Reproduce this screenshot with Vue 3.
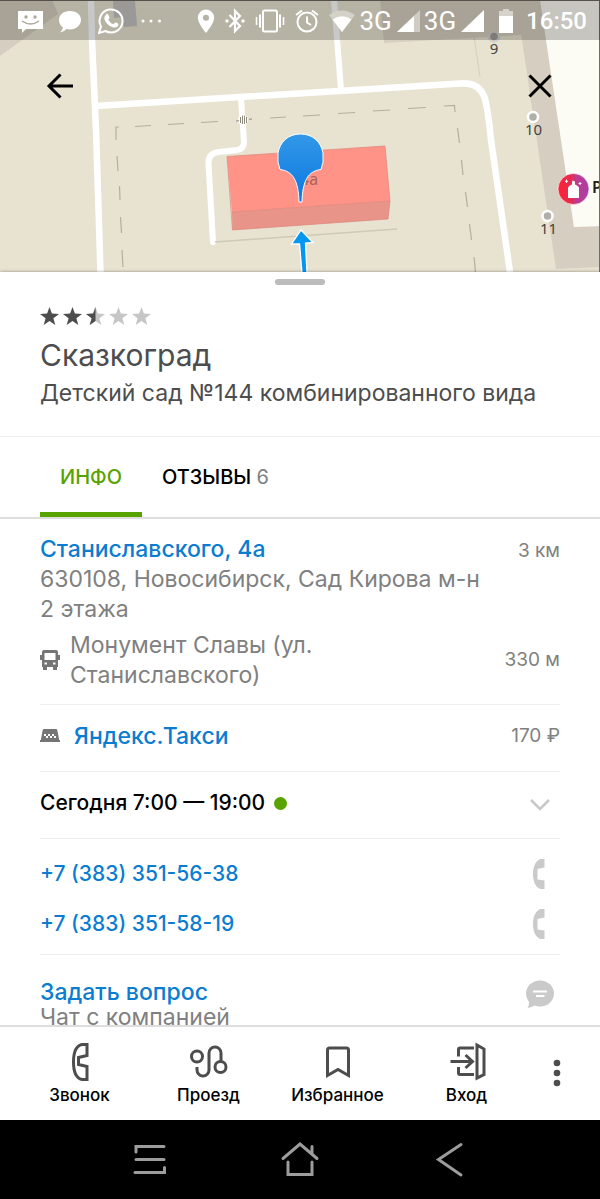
<script setup>
import { ref } from 'vue'

const stars = [1, 1, 0.5, 0, 0]
const phones = ['+7 (383) 351-56-38', '+7 (383) 351-58-19']
const tab = ref('info')
</script>

<template>
  <div class="app">
    <header class="map">
      <svg class="map-canvas" viewBox="0 0 600 272" preserveAspectRatio="xMidYMid slice" aria-hidden="true">
        <defs>
          <linearGradient id="pin" x1="0" y1="0" x2="0" y2="1">
            <stop offset="0" stop-color="#3298e8" />
            <stop offset="1" stop-color="#0b78e0" />
          </linearGradient>
          <linearGradient id="shop" x1="0" y1="0" x2="1" y2="0">
            <stop offset="0" stop-color="#ff2038" />
            <stop offset="0.4" stop-color="#e72c4c" />
            <stop offset="0.6" stop-color="#bf3a90" />
            <stop offset="1" stop-color="#a83fa8" />
          </linearGradient>
        </defs>
        <rect width="600" height="272" fill="#e8e3d1" />
        <path d="M0 0H52L58 14L0 56Z" fill="#d6cfc1" />
        <path d="M113 0H135L137 26L124 27L122 17L114 18Z" fill="#c6c2c2" />
        <path d="M380 0H540L548 40L521 35L384 43Z" fill="#d6cfc1" />
        <path d="M516 0H545L574 227L600 226V267L556 269Z" fill="#d6cfc1" />
        <path d="M540 0H600V226L574 227Z" fill="#fdfcf4" />
        <path d="M474 36L480 77" stroke="#d5cfbf" fill="none" />
        <g fill="none" stroke="#fff" stroke-width="6.5" stroke-linejoin="round">
          <path d="M91 0L92 40L96 130L100.500 272" />
          <path d="M95 106L240 97L460 83.500Q480 82 485 99Q488 110 491 140L510 272" />
          <path d="M334 0L341 90" stroke-width="6" />
          <path d="M241 98L244 142Q244 149 237 150L219 152Q208 153 208.500 164L213 242" stroke-width="6" stroke-linecap="round" />
        </g>
        <path d="M215 242L397 229" stroke="#cfc9b7" stroke-width="1.500" />
        <g fill="none" stroke="#b4ae9e" stroke-width="1.200">
          <path d="M116 140V127L119 127M117 156L118 171M119.500 186L120 200M120.500 217L121.500 233M122 250L123 267" />
          <path d="M135 126.500L151 125.500M168 124.500L184 123.500M201 122.500L218 121.500M270 118L286 117M303 116L320 115M338 113.500L355 112.500M373 111L390 110M408 108.500L426 107.500M444 106L454.500 105.500L455 112" />
          <path d="M457.500 128L459.500 143M461.500 160L463 175M465.500 192L467.500 207M469.500 224L471.500 240M474 257L475.500 272" />
        </g>
        <circle cx="243" cy="120" r="5" fill="#fff" />
        <path d="M236 121L239 120.700M240.500 117V123M242.500 115.500V124M244.500 115.500V124M246.500 117V123M249 119.300L252 119" stroke="#8d8a82" />
        <path d="M227 156.500L385 146L390 201L232 212Z" fill="#ff9387" />
        <path d="M232 212L390 201L388 219L232.500 230Z" fill="#e89489" />
        <path d="M227 156.500L385 146L390 201L388 219L232.500 230ZM232 212L390 201" fill="none" stroke="#dc847a" stroke-width="0.700" />
        <text x="300" y="185" class="house">4а</text>
        <path d="M280 169.500Q277 163 278 153C280 142 288 134 300.500 134S321 142 323 153Q324 163 321 169.500C308 171 302.500 181 302 202H299C298.500 181 293 171 280 169.500Z" fill="url(#pin)" stroke="#fff" stroke-width="1" />
        <path d="M301 230L313 242.500L305.500 243L307 273H302L299.500 244L291.500 244Z" fill="#0496f0" stroke="#fff" stroke-width="1.300" />
        <g fill="#b2afa8" stroke="#fff" stroke-width="2.500">
          <circle cx="494" cy="36.500" r="5" fill="#a29f99" stroke="#d3d1cb" />
          <circle cx="533" cy="117" r="5" />
          <circle cx="547.500" cy="216" r="5" />
        </g>
        <g class="num">
          <text x="494" y="54">9</text>
          <text x="533.500" y="135">10</text>
          <text x="548.500" y="234">11</text>
        </g>
        <circle cx="573.500" cy="189" r="15.500" fill="url(#shop)" stroke="#fff" stroke-width="0.600" />
        <path d="M568 188Q568 186.500 570 185.500L572 184.500V182H575V184.500L577 185.500Q579 186.500 579 188V198H568Z" fill="#fff" />
        <path d="M566.500 179.500V183M565 181.300H568M580 182V185M578.500 183.500H581.500M572 181L575 182" stroke="#fff" />
        <text x="592" y="193" class="poi">Р</text>
        <path d="M599.500 0V272" stroke="#706e68" />
      </svg>

      <div class="status">
        <div class="st-left">
          <svg width="26" height="26" viewBox="0 0 26 26"><path d="M0 3H25V21H8L4 25V21H0Z" fill="#fff" /><g fill="#aaa79b"><circle cx="8" cy="9" r="1.700" /><circle cx="17" cy="9" r="1.700" /></g><path d="M4 13Q12.500 19 21 13" fill="none" stroke="#aaa79b" stroke-width="1.500" /></svg>
          <svg width="26" height="26" viewBox="0 0 26 26"><path d="M12 3C5 3 1 7 1 12C1 15 2.500 18 5 19.500Q4.500 22 2 24.500Q6 24 8.500 21C16 23 23 18 23 12C23 7 19 3 12 3Z" fill="#fff" /></svg>
          <svg width="26" height="28" viewBox="0 0 26 28"><path d="M1 26L3 19.500A11.500 11.500 0 1 1 7.500 24Z" fill="none" stroke="#fff" stroke-width="2" /><path d="M8 7.500Q9.500 6 10.500 8L11.500 10.500Q11.500 11.500 10.300 12.700Q12 16 15.500 17.300L17 15.700Q18 15 20 16.500Q21 17 20 19Q18 21.500 14 20Q8.500 18 6.500 12.500Q5.800 9.500 8 7.500Z" fill="#fff" /></svg>
          <svg width="26" height="26" viewBox="0 0 26 26" fill="#fff"><circle cx="5" cy="13" r="1.500" /><circle cx="13" cy="13" r="1.500" /><circle cx="21.500" cy="13" r="1.500" /></svg>
        </div>
        <div class="st-right">
          <svg width="18" height="26" viewBox="0 0 18 26"><path fill-rule="evenodd" d="M9 1.500A8.200 8.200 0 0 0 .800 9.700C.800 15 9 25 9 25S17.200 15 17.200 9.700A8.200 8.200 0 0 0 9 1.500ZM9 6.700A3 3 0 1 1 9 12.700A3 3 0 0 1 9 6.700Z" fill="#fff" /></svg>
          <svg width="20" height="26" viewBox="0 0 20 26"><path d="M4.500 7L15 18L10 23V3L15 8L4.500 19" fill="none" stroke="#fff" stroke-width="2.200" /><circle cx="2" cy="13" r="1.700" fill="#fff" /><circle cx="18" cy="13" r="1.700" fill="#fff" /></svg>
          <svg width="30" height="26" viewBox="0 0 30 26" fill="none" stroke="#fff" stroke-width="2"><rect x="8" y="2.500" width="14" height="21" rx="1.500" /><path d="M5 6.500V19.500M25 6.500V19.500" /><path d="M1.500 9V17M28.500 9V17" stroke-width="1.500" /></svg>
          <svg width="24" height="26" viewBox="0 0 24 26" fill="none" stroke="#fff" stroke-width="2"><circle cx="12" cy="14" r="9.500" /><path d="M12 8.500V14.500L16 17M1 7L7 2.500M23 7L17 2.500" /></svg>
          <svg width="26" height="26" viewBox="0 0 26 26"><path d="M0 7Q13 -2 26 7L13 24Z" fill="#d3d1c8" /><path d="M3.500 11.500Q13 5 22.500 11.500L13 24Z" fill="#fff" /></svg>
          <span class="net">3G</span>
          <svg width="24" height="26" viewBox="0 0 24 26"><path d="M24 2V24H1Z" fill="#cfccc2" /><path d="M18 8V24H1Z" fill="#fff" /></svg>
          <span class="net">3G</span>
          <svg width="24" height="26" viewBox="0 0 24 26"><path d="M24 2V24H1Z" fill="#fff" /></svg>
          <svg class="battery" width="16" height="26" viewBox="0 0 16 26"><path d="M5 1H11V3H15V8H1V3H5Z" fill="#d5d3cc" /><path d="M1 8H15V25H1Z" fill="#fff" /></svg>
          <time class="clock">16:50</time>
        </div>
      </div>

      <div class="map-nav">
        <button aria-label="Назад"><svg width="30" height="30" viewBox="0 0 30 30"><path d="M28 15H4M15.500 3.500L4 15L15.500 26.500" /></svg></button>
        <button aria-label="Закрыть"><svg width="30" height="30" viewBox="0 0 30 30"><path d="M4.500 4.500L25.500 25.500M25.500 4.500L4.500 25.500" /></svg></button>
      </div>
    </header>

    <main class="sheet">
      <div class="handle"></div>
      <section class="head">
        <div class="stars" role="img" aria-label="2,5 из 5">
          <svg v-for="(s, i) in stars" :key="i" width="19" height="18" viewBox="0 0 19 18">
            <path d="M9.500 0L11.900 6.500L19 6.900L13.400 11.200L15.300 18L9.500 14.100L3.700 18L5.600 11.200L0 6.900L7.100 6.500Z" :fill="s === 1 ? '#4d4d4d' : '#c6c6c6'" />
            <path v-if="s === 0.5" d="M9.500 0V14.100L3.700 18L5.600 11.200L0 6.900L7.100 6.500Z" fill="#4d4d4d" />
          </svg>
        </div>
        <h1>Сказкоград</h1>
        <p>Детский сад №144 комбинированного вида</p>
      </section>

      <nav class="tabs">
        <button :class="{ active: tab === 'info' }" @click="tab = 'info'">ИНФО</button>
        <button :class="{ active: tab === 'reviews' }" @click="tab = 'reviews'">ОТЗЫВЫ <span>6</span></button>
      </nav>

      <div class="content">
        <section class="row address">
          <div class="line">
            <div>
              <a href="#" class="link">Станиславского, 4а</a>
              <div>630108, Новосибирск, Сад Кирова м-н</div>
              <div>2 этажа</div>
            </div>
            <span class="side">3 км</span>
          </div>
          <div class="line stop">
            <svg width="20" height="20" viewBox="0 0 20 20"><path fill-rule="evenodd" d="M4 0H16Q18 0 18 2V5H20V10H18V17H17V20H13V17H7V20H3V17H2V10H0V5H2V2Q2 0 4 0ZM4.500 3V10H15.500V3ZM4.500 12.500V14.500H7V12.500ZM13 12.500V14.500H15.500V12.500Z" fill="#757575" /></svg>
            <div class="stop-name">Монумент Славы (ул. Станиславского)</div>
            <span class="side">330 м</span>
          </div>
        </section>

        <section class="row single">
          <svg width="20" height="14" viewBox="0 0 20 14"><path d="M4 0H16Q17 0 17.300 1L19 10V11H20V13H0V11H1V10L2.700 1Q3 0 4 0Z" fill="#757575" /><path d="M4 5H6V7H8V5H10V7H12V5H14V7H16V9H14V7H12V9H10V7H8V9H6V7H4Z" fill="#fff" /></svg>
          <a href="#" class="link taxi">Яндекс.Такси</a>
          <span class="side">170 ₽</span>
        </section>

        <section class="row single hours">
          <span>Сегодня 7:00 — 19:00</span><i class="dot"></i>
          <button class="end" aria-label="Показать расписание"><svg width="40" height="24" viewBox="0 0 40 24"><path d="M11 9L20 18L29 9" fill="none" stroke="#c8c8c8" stroke-width="2.500" /></svg></button>
        </section>

        <section class="row phones">
          <div v-for="p in phones" :key="p" class="phone">
            <a href="#" class="link">{{ p }}</a>
            <button class="end" aria-label="Позвонить"><svg width="40" height="30" viewBox="0 0 40 30"><path d="M24.500 0V8.500L17.500 10V20.500L24.500 21.500V30H21C16 29 13 23 13 15S16 1 21 0Z" fill="#cacaca" /></svg></button>
          </div>
        </section>

        <section class="ask">
          <div><a href="#" class="link">Задать вопрос</a><div>Чат с компанией</div></div>
          <svg width="40" height="28" viewBox="0 0 40 28"><ellipse cx="20" cy="13.500" rx="14" ry="13" fill="#cacaca" /><path d="M9 20V23Q9 25.500 7.500 28Q12.500 27.500 15 25Z" fill="#cacaca" /><path d="M13 11.500H27M16 16H24.500" stroke="#fff" stroke-width="2.200" /></svg>
        </section>
      </div>
    </main>

    <nav class="actions">
      <button>
        <svg viewBox="0 0 40 40"><path d="M27 3.500V14.500L18.500 16.500V23.500L27 25.500V38.500H22C15 37 13.500 29 13.500 21S15 5 22 3.500Z" /></svg>
        Звонок
      </button>
      <button>
        <svg viewBox="0 0 40 40"><circle cx="8" cy="15.500" r="5.500" /><circle cx="31.500" cy="26" r="5.500" /><path d="M8 26V29A6 6 0 0 0 20 29V12A6 6 0 0 1 32 12V20" /></svg>
        Проезд
      </button>
      <button>
        <svg viewBox="0 0 40 40"><path d="M9.500 34.500V9Q9.500 7 11.500 7H28.500Q30.500 7 30.500 9V34.500L20 28.500Z" /></svg>
        Избранное
      </button>
      <button>
        <svg viewBox="0 0 40 40"><path d="M27 7H13Q11.500 7 11.500 8.500V15.500M11.500 26V32Q11.500 33.500 13 33.500H27M3.500 20.500H25M18.500 14L25.500 20.500L18.500 27M30 4L37 8V33.500L30 37Z" /></svg>
        Вход
      </button>
      <button class="more" aria-label="Ещё">
        <svg viewBox="0 0 10 40"><circle cx="5" cy="10" r="3.300" /><circle cx="5" cy="20" r="3.300" /><circle cx="5" cy="30" r="3.300" /></svg>
      </button>
    </nav>

    <footer class="system">
      <button aria-label="Меню"><svg width="40" height="40" viewBox="0 0 40 40"><path d="M6 12V6.500H34M6 19.500H34M5 32.500H34.500V27.500" /></svg></button>
      <button aria-label="Домой"><svg width="40" height="40" viewBox="0 0 40 40"><path d="M3 18.500L20 4L37 18.500M8 22V34.500H32V22M32 6.500V14" /></svg></button>
      <button aria-label="Назад"><svg width="40" height="40" viewBox="0 0 40 40"><path d="M31 4.500L8.500 19.500L31 35" /></svg></button>
    </footer>
  </div>
</template>

<style>
body {
  margin: 0;
}
</style>

<style scoped>
.app {
  display: flex;
  flex-direction: column;
  height: 100vh;
  background: #fff;
  color: #808080;
  font-family: Inter, "Liberation Sans", sans-serif;
  font-size: 23px;
  line-height: 30px;
}
button {
  border: 0;
  padding: 0;
  background: none;
  color: inherit;
  font: inherit;
  cursor: pointer;
}
svg {
  display: block;
  flex: none;
}
.map {
  position: relative;
  flex: none;
  height: 272px;
  overflow: hidden;
}
.map-canvas {
  position: absolute;
  inset: 0;
  width: 100%;
  height: 100%;
}
.house {
  font: 16px "Noto Sans", sans-serif;
  fill: #a8645c;
}
.num {
  font: 15px "Noto Sans", sans-serif;
  fill: #444;
  text-anchor: middle;
}
.poi {
  font: 600 16px "Noto Sans", sans-serif;
  fill: #222;
}
.status {
  position: relative;
  display: flex;
  justify-content: space-between;
  align-items: center;
  box-sizing: border-box;
  height: 40px;
  padding: 0 13px 0 18px;
  border-top: 1px solid #54504b;
  background: rgba(0, 0, 0, 0.215);
  color: #fff;
}
.st-left {
  display: flex;
  align-items: center;
  gap: 14px;
}
.st-right {
  display: flex;
  align-items: center;
  gap: 10px;
}
.net {
  margin: 0 -6px;
  font: 400 26px/30px Roboto, sans-serif;
}
.battery {
  margin: 0 2px 0 4px;
}
.clock {
  font: 500 24px/30px Roboto, sans-serif;
}
.map-nav {
  position: relative;
  display: flex;
  justify-content: space-between;
  padding: 31px 45px;
}
.map-nav path {
  fill: none;
  stroke: #000;
  stroke-width: 3;
}
.sheet {
  position: relative;
  display: flex;
  flex: 1;
  flex-direction: column;
  min-height: 0;
  background: #fff;
  box-shadow: 0 0 3px rgba(0, 0, 0, 0.4);
}
.handle {
  flex: none;
  width: 50px;
  height: 6px;
  margin: 7px auto 0;
  border-radius: 3px;
  background: #bcbcbc;
}
.head {
  flex: none;
  padding: 22px 40px 28px;
  border-bottom: 1px solid #eee;
  color: #4d4d4d;
}
.stars {
  display: flex;
  gap: 4px;
}
h1 {
  margin: 12px 0 5px;
  font-size: 30px;
  font-weight: 400;
  line-height: 36px;
}
p {
  margin: 0;
}
.tabs {
  display: flex;
  flex: none;
  height: 80px;
  padding: 0 40px;
  border-bottom: 2px solid #dedede;
  color: #000;
  font-size: 20px;
  font-weight: 500;
}
.tabs button {
  box-sizing: border-box;
  padding: 5px 20px 0;
  border-bottom: 5px solid transparent;
}
.tabs .active {
  border-bottom-color: #58a300;
  border-radius: 2px 2px 0 0;
  color: #58a300;
}
.tabs span {
  color: #808080;
  font-weight: 400;
}
.content {
  flex: 1;
  min-height: 0;
  padding: 0 40px;
  overflow-y: auto;
  scrollbar-width: none;
}
.row {
  border-bottom: 1px solid #eee;
}
.address {
  padding: 15px 0 14px;
}
.line {
  display: flex;
  justify-content: space-between;
}
.stop {
  align-items: center;
  gap: 10px;
  margin-top: 6px;
}
.stop-name {
  flex: 1;
  padding-right: 160px;
}
.side {
  margin-left: auto;
  font-size: 19px;
  white-space: nowrap;
}
.address .line:first-child .side {
  line-height: 34px;
}
.link {
  color: #0b7dd0;
  font-weight: 500;
  text-decoration: none;
}
.single {
  display: flex;
  align-items: center;
  box-sizing: border-box;
  height: 67px;
  padding-bottom: 4px;
}
.taxi {
  margin-left: 14px;
}
.hours {
  color: #000;
  font-weight: 500;
  font-size: 21px;
}
.dot {
  width: 13px;
  height: 13px;
  margin-left: 9px;
  border-radius: 50%;
  background: #58a300;
}
.end {
  margin-left: auto;
}
.phones {
  padding: 10px 0 5px;
  font-size: 21px;
}
.phone {
  display: flex;
  align-items: center;
  height: 50px;
}
.ask {
  display: flex;
  justify-content: space-between;
  padding: 25px 0;
  line-height: 25px;
}
.actions {
  position: relative;
  display: flex;
  flex: none;
  box-sizing: border-box;
  height: 95px;
  padding: 14px 17px 0 15px;
  border-top: 2px solid #dedede;
  background: #fff;
  color: #000;
  font-size: 17px;
  font-weight: 500;
  line-height: 24px;
}
.actions button {
  display: flex;
  flex: 1;
  flex-direction: column;
  align-items: center;
  gap: 2px;
}
.actions svg {
  width: 40px;
  height: 40px;
  fill: none;
  stroke: #4d4d4d;
  stroke-width: 3;
}
.actions .more {
  flex: none;
  width: 52px;
  padding-top: 12px;
}
.actions .more svg {
  width: 10px;
  fill: #4d4d4d;
  stroke: none;
}
.system {
  display: flex;
  flex: none;
  justify-content: center;
  gap: 110px;
  height: 79px;
  background: #000;
}
.system path {
  fill: none;
  stroke: #9c9c9c;
  stroke-width: 3;
  stroke-linecap: round;
}
</style>
